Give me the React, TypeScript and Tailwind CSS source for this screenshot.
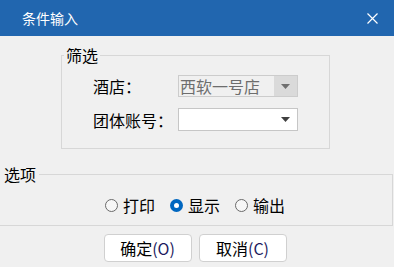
import type { ReactNode } from "react";

const font = { fontFamily: '"Noto Sans CJK SC", "Microsoft YaHei", sans-serif' };

const Arrow = ({ color }: { color: string }) => (
  <svg width="9" height="5" viewBox="0 0 9 5">
    <path d="M0 0 H9 L4.5 5 Z" fill={color} />
  </svg>
);

const Combo = ({ value, disabled }: { value?: string; disabled?: boolean }) => (
  <div
    className={`flex w-[120px] border ${
      disabled ? "h-[22px] border-[#cccccc] bg-[#f0f0f0]" : "h-[23px] border-[#c6c6c6] bg-white"
    }`}
  >
    <div className="flex flex-1 items-center whitespace-nowrap pl-[1px] text-[16px] leading-[20px] text-[#6d6d6d]">
      {value}
    </div>
    <div
      className={`flex w-[23px] items-center justify-center ${disabled ? "bg-[#dadada]" : ""}`}
    >
      <Arrow color={disabled ? "#6e6e6e" : "#404040"} />
    </div>
  </div>
);

const Radio = ({ label, checked }: { label: string; checked?: boolean }) => (
  <label className="flex items-center gap-[5px]">
    {checked ? (
      <span className="flex h-[13px] w-[13px] items-center justify-center rounded-full bg-[#0067c0]">
        <span className="h-[5px] w-[5px] rounded-full bg-white" />
      </span>
    ) : (
      <span className="h-[13px] w-[13px] rounded-full border border-[#6a6a6a] bg-[#f7f7f7]" />
    )}
    <span className="text-[16px] leading-[20px]">{label}</span>
  </label>
);

const Group = ({ title, className, legendClass, children }: { title: string; className: string; legendClass: string; children: ReactNode }) => (
  <fieldset className={`border border-[#d7d7d7] ${className}`}>
    <legend className={`text-[16px] leading-[20px] ${legendClass}`}>{title}</legend>
    {children}
  </fieldset>
);

const Button = ({ text, keyName }: { text: string; keyName: string }) => (
  <button className="flex h-[28px] w-[88px] items-center justify-center rounded-[4px] border border-[#d0d0d0] bg-white text-[16px] leading-[20px] text-black">
    {text}
    <span className="text-[#1c1a5e]">({keyName})</span>
  </button>
);

export default function App() {
  return (
    <div className="h-[267px] w-[394px] overflow-hidden bg-[#f0f0f0] text-black" style={font}>
      <div className="flex h-9 items-center justify-between bg-[#2166af] pl-[22px] pr-[16px] text-white">
        <span className="text-[14px] leading-[20px]">条件输入</span>
        <svg width="11" height="11" viewBox="0 0 11 11">
          <path d="M0.5 0.5 L10.5 10.5 M10.5 0.5 L0.5 10.5" stroke="white" strokeWidth="1.2" />
        </svg>
      </div>

      <Group title="筛选" className="ml-[61px] mt-[9px] w-[269px] pb-[17px]" legendClass="ml-[2px] px-[2px]">
        <div className="pl-[31px]">
          <div className="mt-[10px] flex items-center">
            <span className="w-[85px] text-[16px] leading-[20px]">酒店：</span>
            <Combo value="西软一号店" disabled />
          </div>
          <div className="mt-[11px] flex items-center">
            <span className="w-[85px] text-[16px] leading-[20px]">团体账号：</span>
            <Combo />
          </div>
        </div>
      </Group>

      <Group title="选项" className="ml-[-3px] mt-[15px] w-[396px] pb-[10px]" legendClass="ml-[2px] pl-[4px] pr-[3px]">
        <div className="mt-[11px] flex items-center justify-center gap-[15px]">
          <Radio label="打印" />
          <Radio label="显示" checked />
          <Radio label="输出" />
        </div>
      </Group>

      <div className="mt-[8px] flex justify-center gap-[7px] pr-[4px]">
        <Button text="确定" keyName="O" />
        <Button text="取消" keyName="C" />
      </div>
    </div>
  );
}
